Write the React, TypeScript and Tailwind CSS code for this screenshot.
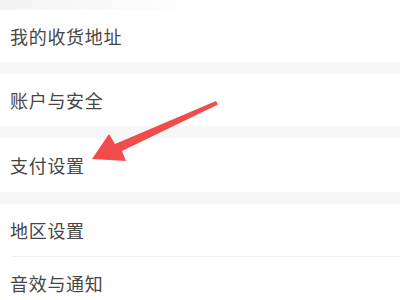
import React from 'react';

type Row = { label: string; h: string; divider?: boolean };

const groups: Row[][] = [
  [{ label: '我的收货地址', h: 'h-[52px]' }],
  [{ label: '账户与安全', h: 'h-[52px]' }],
  [{ label: '支付设置', h: 'h-[54px]' }],
  [
    { label: '地区设置', h: 'h-[53px]', divider: true },
    { label: '音效与通知', h: 'h-[52px]' },
  ],
];

function Arrow() {
  // red hand-drawn pointer over the list
  return (
    <svg className="absolute left-0 top-0 pointer-events-none" width="400" height="300" viewBox="0 0 400 300">
      <polygon
        points="216,101 218,104.5 122,151 126,161 92,159 109,134 115,144"
        fill="#f24b4b"
      />
    </svg>
  );
}

export default function App() {
  return (
    <div
      className="relative w-[400px] h-[300px] overflow-hidden bg-white"
      style={{ fontFamily: '"Noto Sans CJK SC", "Noto Sans", sans-serif' }}
    >
      <div className="h-[10px] bg-gradient-to-r from-[#f3f3f6] via-white to-white" />
      {groups.map((group, gi) => (
        <div key={gi}>
          {gi > 0 && <div className="h-[12px] bg-[#f7f7f7]" />}
          {group.map((row) => (
            <div key={row.label} className={`relative flex items-center pl-[10px] ${row.h}`}>
              <span className="text-[18px] tracking-[0.7px] text-[#464646]">{row.label}</span>
              {row.divider && <div className="absolute bottom-0 left-[12px] right-0 h-px bg-[#efefef]" />}
            </div>
          ))}
        </div>
      ))}
      <Arrow />
    </div>
  );
}
